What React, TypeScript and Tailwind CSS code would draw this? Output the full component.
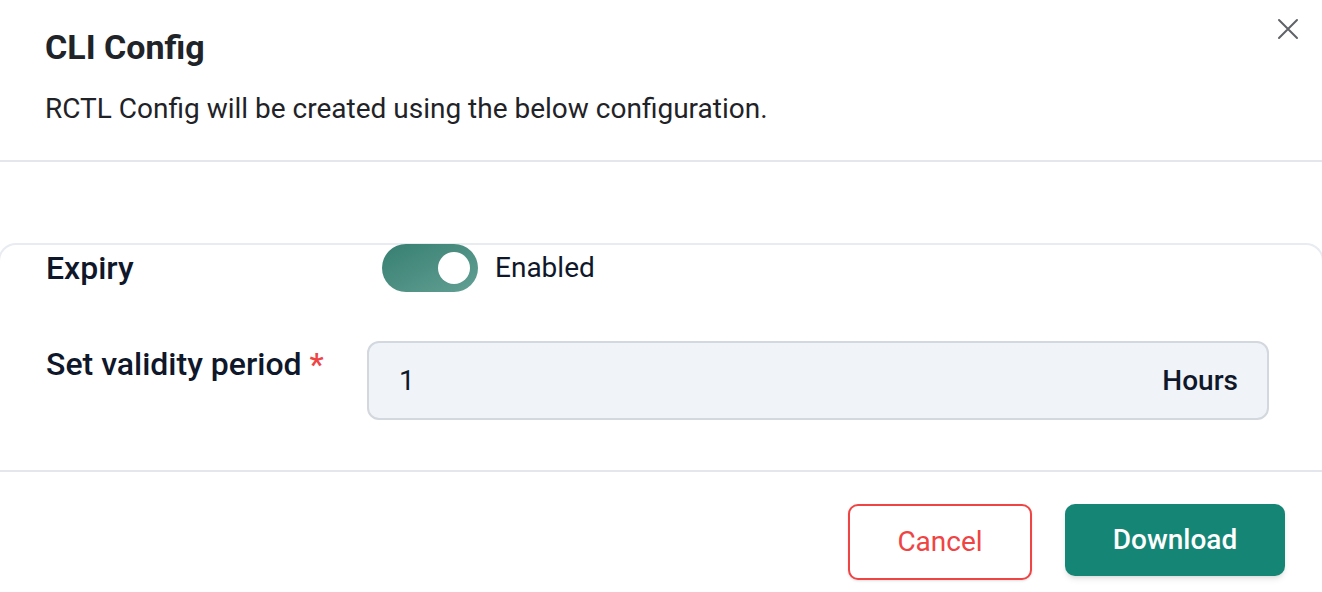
import { useState } from "react";

const font = { fontFamily: "Roboto, 'Liberation Sans', sans-serif" };

const CloseIcon = () => (
  <svg width="22" height="22" viewBox="0 0 22 22" fill="none" stroke="#5f6368" strokeWidth="2" strokeLinecap="round">
    <path d="M2 2L20 20M20 2L2 20" />
  </svg>
);

const Toggle = ({ on, onChange }: { on: boolean; onChange: () => void }) => (
  <button
    onClick={onChange}
    className={`flex items-center w-[96px] h-[48px] rounded-full px-[8px] ${on ? "justify-end bg-gradient-to-br from-[#367f71] to-[#62a094]" : "justify-start bg-gray-300"}`}
  >
    <span className="block w-[32px] h-[32px] rounded-full bg-white" />
  </button>
);

const App = () => {
  const [enabled, setEnabled] = useState(true);
  const [hours, setHours] = useState("1");

  return (
    <div className="relative w-full min-h-screen bg-white overflow-hidden" style={font}>
      <button className="absolute top-[18px] left-[1277px]">
        <CloseIcon />
      </button>

      <div className="h-[162px] px-[45px] pt-[27px] border-b-2 border-[#e3e7ed]">
        <h2 className="text-[34px] leading-[40px] font-bold text-[#202328]">CLI Config</h2>
        <p className="mt-[26px] text-[28px] leading-[32px] text-[#1f2328]">
          RCTL Config will be created using the below configuration.
        </p>
      </div>

      <div className="pt-[81px] border-b-2 border-[#e3e7ed]">
        <div className="-mx-[2px] rounded-t-[18px] border-t-2 border-x-2 border-[#e8ebf0] pl-[46px] pr-[53px] pb-[50px]">
          <div className="flex items-center h-[48px] -mt-[1px]">
            <span className="w-[321px] text-[32px] font-medium text-[#0f172a]">Expiry</span>
            <div className="ml-[15px] flex items-center gap-[17px]">
              <Toggle on={enabled} onChange={() => setEnabled(v => !v)} />
              <span className="text-[28px] text-[#0f172a]">{enabled ? "Enabled" : "Disabled"}</span>
            </div>
          </div>

          <div className="flex mt-[49px]">
            <label className="w-[321px] pt-[5px] text-[32px] leading-[36px] font-medium text-[#0f172a]">
              Set validity period <span className="text-[#ef4444]">*</span>
            </label>
            <div className="flex-1 flex items-center h-[79px] rounded-[12px] border-2 border-[#d3d7de] bg-[#f0f3f7] pl-[30px] pr-[29px]">
              <input
                value={hours}
                onChange={e => setHours(e.target.value)}
                className="flex-1 bg-transparent outline-none text-[28px] text-[#0f172a]"
              />
              <span className="text-[28px] font-medium text-[#0f172a]">Hours</span>
            </div>
          </div>
        </div>
      </div>

      <div className="flex justify-end gap-[33px] pt-[32px] pr-[37px]">
        <button className="w-[184px] h-[76px] rounded-[10px] border-2 border-[#ef4444] bg-white text-[28px] text-[#ef4444] shadow-sm">
          Cancel
        </button>
        <button className="w-[220px] h-[72px] rounded-[10px] bg-[#158676] text-[28px] font-medium text-white shadow-md">
          Download
        </button>
      </div>
    </div>
  );
};

export default App;
